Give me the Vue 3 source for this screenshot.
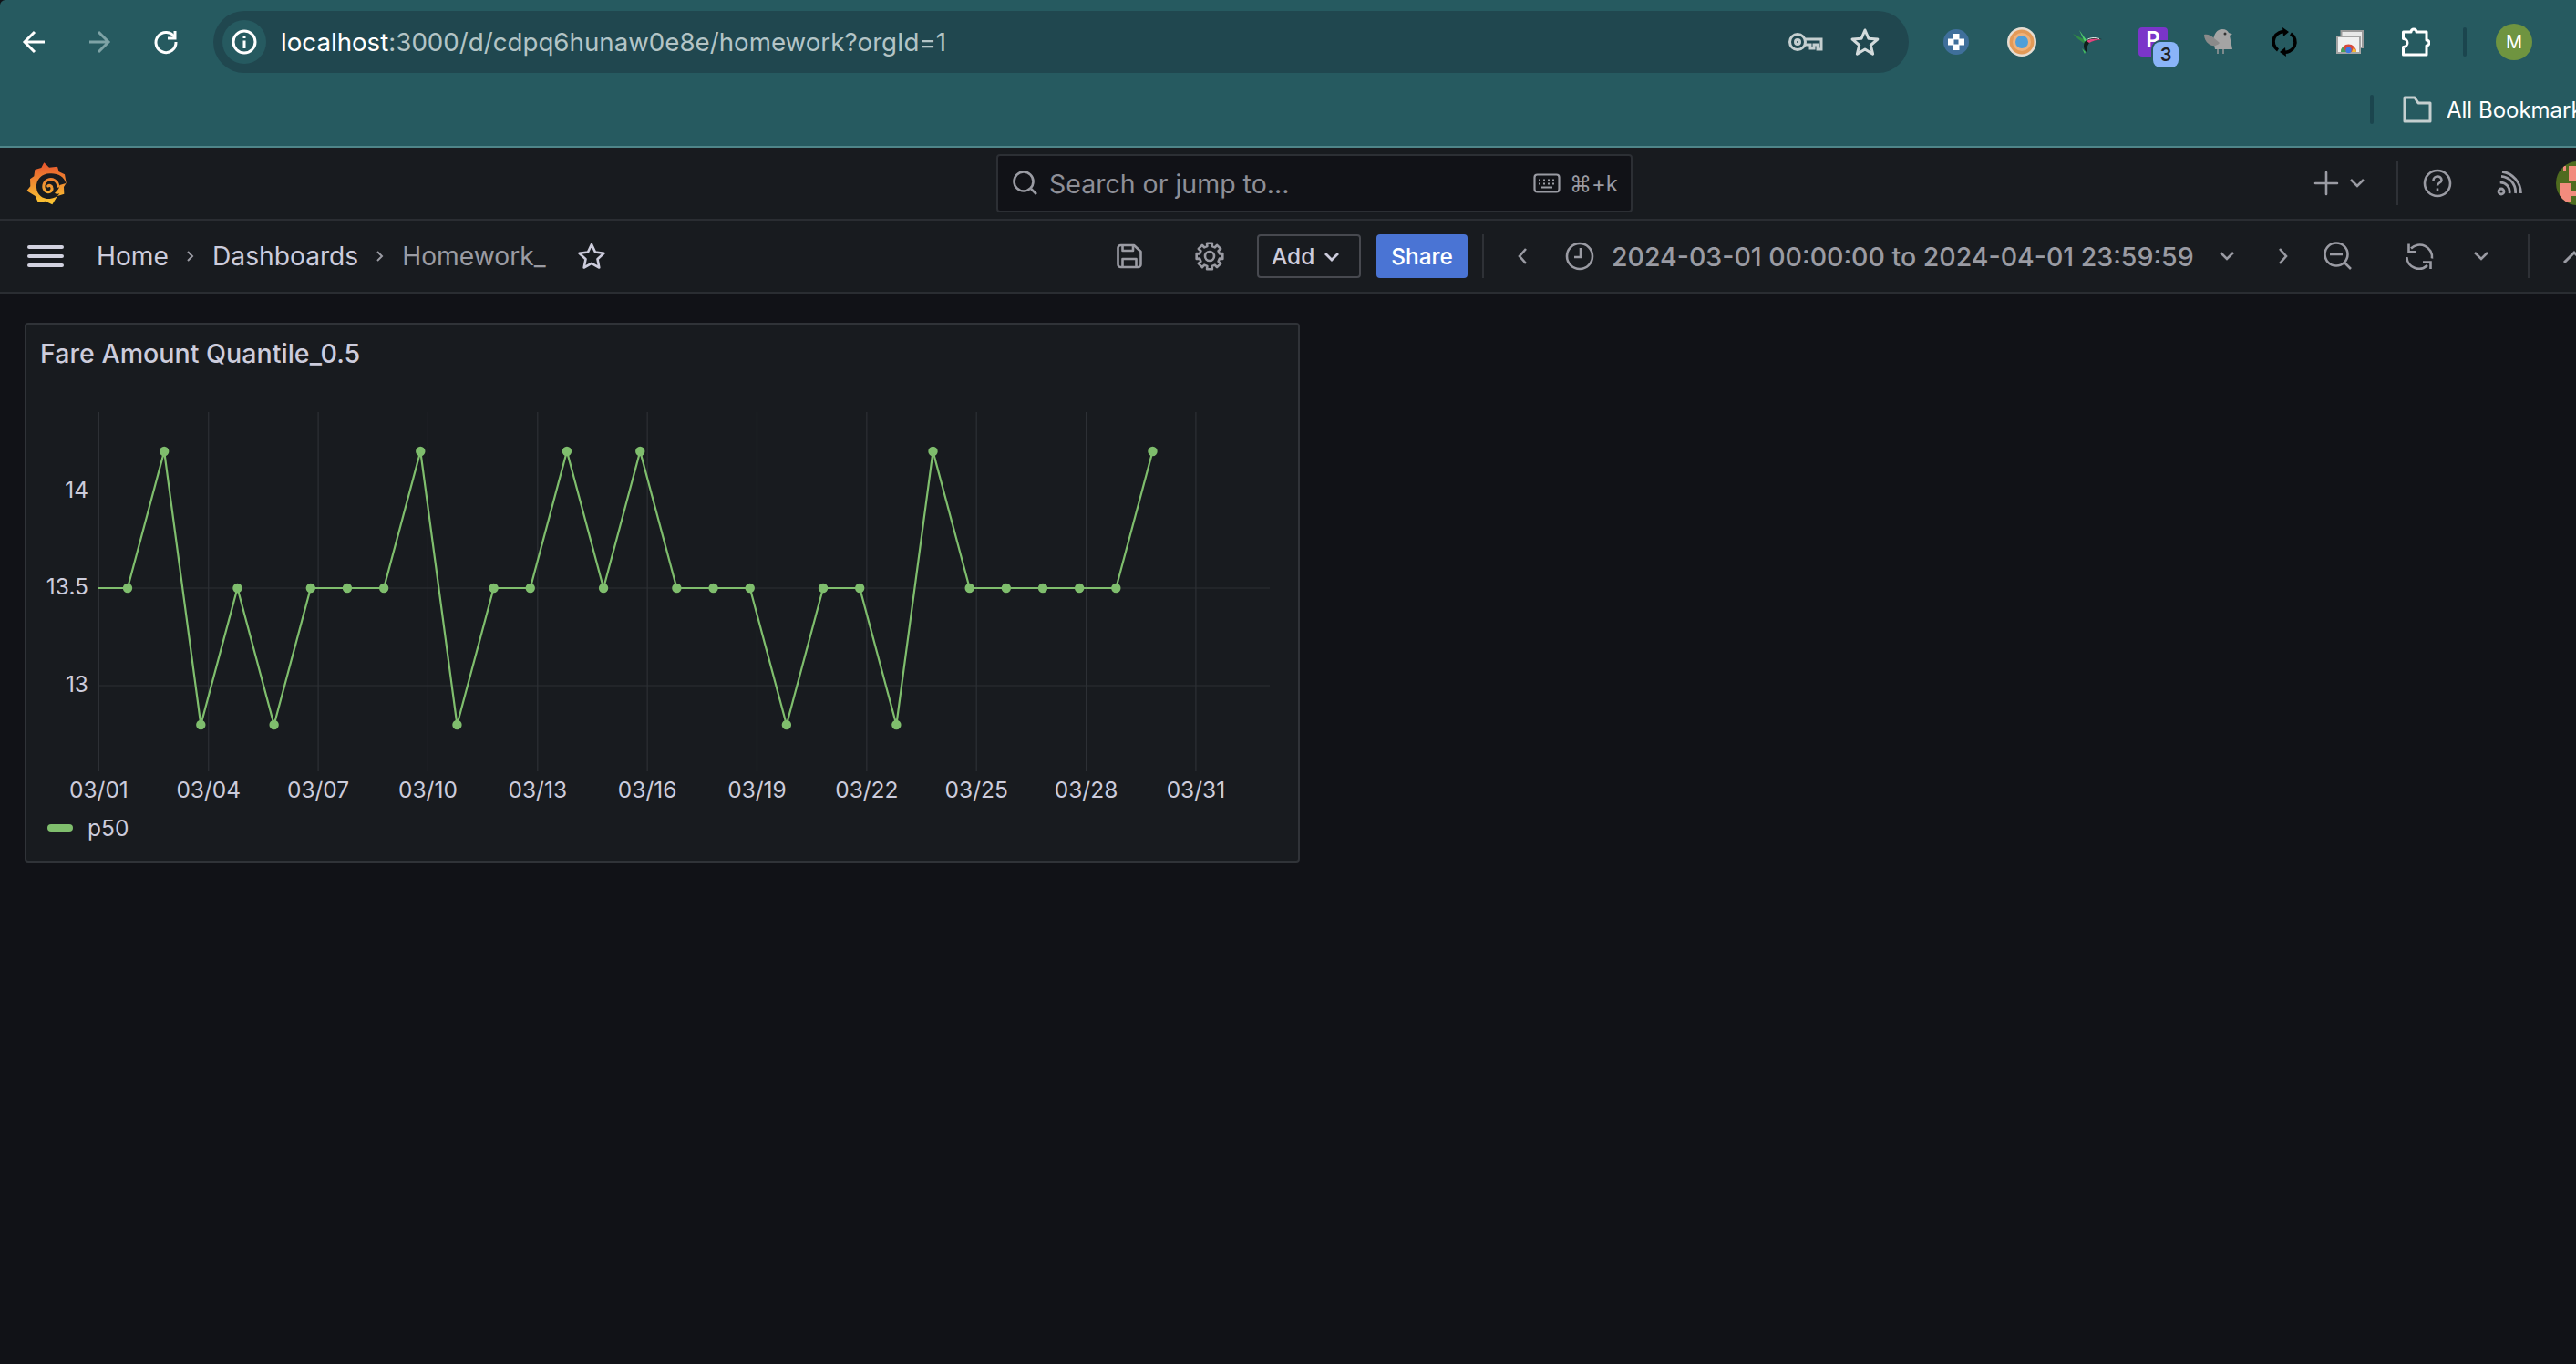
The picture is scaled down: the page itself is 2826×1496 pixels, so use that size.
<script setup>
// Chart geometry, in panel-svg coordinates
const ox = 29
const oy = 420
const xLabels = ['03/01', '03/04', '03/07', '03/10', '03/13', '03/16', '03/19', '03/22', '03/25', '03/28', '03/31']
const vTicks = xLabels.map((label, i) => ({ label, x: 108.4 + 120.35 * i - ox }))

const yLabels = [
  { label: '14', y: 538.5 - oy },
  { label: '13.5', y: 645 - oy },
  { label: '13', y: 752 - oy }
]

const levels = { h: 495, m: 645, l: 795 }
const series = 'mhlmlmmmhlmmhmhmmmlmmlhmmmmmh'.split('')
const points = series.map((s, i) => ({
  x: 140 + 40.16 * i - ox,
  y: levels[s] - oy
}))
const linePoints = [`${108 - ox},${levels.m - oy}`, ...points.map(p => `${p.x},${p.y}`)].join(' ')

// Settings cog outline: 8 teeth round the centre of a 32 box
const gearPath = (() => {
  const pts = []
  for (let i = 0; i < 8; i++) {
    const a = (i * Math.PI) / 4 - Math.PI / 2
    const step = 0.2
    pts.push([a - 0.24, 11.2], [a - step, 14.6], [a + step, 14.6], [a + 0.24, 11.2])
  }
  return 'M' + pts.map(([a, r]) => `${(16 + r * Math.cos(a)).toFixed(2)} ${(16 + r * Math.sin(a)).toFixed(2)}`).join('L') + 'Z'
})()
</script>

<template>
  <div class="screen">
    <header class="chrome">
      <div class="chrome-top">
        <div class="nav-btn">
          <svg width="32" height="32" viewBox="0 0 32 32" fill="none" stroke="#fff" stroke-width="3"><path d="M27 16H6M16 5 5 16l11 11" /></svg>
        </div>
        <div class="nav-btn">
          <svg width="32" height="32" viewBox="0 0 32 32" fill="none" stroke="#7ea3a6" stroke-width="3"><path d="M4 16h21M14 5l11 11-11 11" /></svg>
        </div>
        <div class="nav-btn">
          <svg width="32" height="32" viewBox="0 0 32 32" fill="none" stroke="#fff" stroke-width="3"><path d="M25.500 11A11 11 0 1 0 27 16" /><path d="M26 4v8h-8" /></svg>
        </div>
        <div class="omnibox">
          <div class="site-info">
            <svg width="28" height="28" viewBox="0 0 28 28" fill="none" stroke="#fff" stroke-width="3"><circle cx="14" cy="14" r="12" /><path d="M14 12.500V21M14 7v3" /></svg>
          </div>
          <div class="url"><span class="url-host">localhost</span>:3000/d/cdpq6hunaw0e8e/homework?orgId=1</div>
          <svg class="omni-key" width="40" height="28" viewBox="0 0 40 28" fill="none" stroke="#c5cfd0" stroke-width="3"><circle cx="11" cy="14" r="8.500" /><circle cx="11" cy="14" r="2.500" /><path d="M19.500 11H37v11h-4v-5h-4v4h-4v-4h-5.500" /></svg>
          <svg class="omni-star" width="34" height="34" viewBox="0 0 34 34" fill="none" stroke="#d3dbdc" stroke-width="3" stroke-linejoin="round"><path d="m17 4 3.900 9.200 10 .8-7.600 6.500 2.300 9.700L17 25l-8.600 5.200 2.300-9.700L3.100 14l10-.8z" /></svg>
        </div>
        <div class="ext-row">
          <div class="ext">
            <svg width="28" height="28" viewBox="0 0 28 28"><circle cx="14" cy="14" r="14" fill="#3f6f9b" /><path d="M10.500 5h7v5.500H23v7h-5.500V23h-7v-5.500H5v-7h5.500z" fill="#fff" /><rect x="11.500" y="11.500" width="5" height="5" fill="#3f6f9b" /></svg>
          </div>
          <div class="ext">
            <svg width="32" height="32" viewBox="0 0 32 32"><circle cx="16" cy="16" r="16" fill="#e6ddd2" /><circle cx="16" cy="16" r="13.500" fill="#e39a57" /><circle cx="16" cy="16" r="10" fill="#eeb27c" /><circle cx="16" cy="16" r="7" fill="#4f9fd9" /></svg>
          </div>
          <div class="ext">
            <svg width="32" height="26" viewBox="0 0 32 26"><path d="M0 4l12 6 1 5-7-5z" fill="#2f8a45" /><path d="M7 0l8 11-2 2z" fill="#4fd06a" /><path d="M13 13c3-4 11-5 19-3-7 1-12 2-14 4-3 4-3 8-2 11-4-3-5-8-3-12z" fill="#0e1f1a" /><path d="M15 12c5-3 12-3 16-1.500-5 0-9 1.500-13 3.500z" fill="#e0447e" /><path d="M15 11c4-3 10-3 14-1.500" fill="none" stroke="#dfeee6" /><path d="M10 20l4 4-1 2z" fill="#46c45f" /></svg>
          </div>
          <div class="ext">
            <div class="purple-ext">
              <span class="purple-mark">P</span>
            </div>
            <span class="ext-badge">3</span>
          </div>
          <div class="ext">
            <svg width="32" height="28" viewBox="0 0 32 28"><path d="M10 12C11 5 14 0 20 0c4 0 6 2 7 4l4 1.500-3 1.500 3 15H12z" fill="#a4a4a4" /><path d="M0 6c4-1 8 1 11 4l6 5c-3 4-9 4-12 1C2 14 0 10 0 6z" fill="#8a8a8a" /><circle cx="23" cy="5" r="1.500" fill="#333" /><path d="M15 22v5M21 22v5" stroke="#999" stroke-width="1.500" /></svg>
          </div>
          <div class="ext">
            <svg width="30" height="34" viewBox="0 0 30 34" fill="none" stroke="#000" stroke-width="3.600"><path d="M8 26A11 11 0 0 1 17 6.200" /><path d="M22 8A11 11 0 0 1 13 27.800" /><path d="M13 1l7 5-6 5z" fill="#000" stroke="none" /><path d="M17 33l-7-5 6-5z" fill="#000" stroke="none" /></svg>
          </div>
          <div class="ext">
            <svg width="30" height="26" viewBox="0 0 30 26">
              <rect x="5.500" y="1" width="23.500" height="18" fill="#e8e8e8" stroke="#9a9a9a" stroke-width="2" />
              <rect x="1" y="7" width="25" height="18" fill="#f0f0f0" stroke="#a4a4a4" stroke-width="2" />
              <path d="M5 24a8.500 8.500 0 0 1 17 0z" fill="#d7483a" />
              <path d="M5 24a8.500 8.500 0 0 1 2-5.500l4 5.500z" fill="#3fa45b" />
              <path d="M17 24l2-5a8.500 8.500 0 0 1 3 5z" fill="#f2c230" />
              <circle cx="13.500" cy="22" r="3.200" fill="#3b78e7" />
            </svg>
          </div>
          <div class="ext">
            <svg width="32" height="32" viewBox="0 0 32 32" fill="none" stroke="#fff" stroke-width="3" stroke-linejoin="round"><path d="M2.500 5H11a3 3 0 0 1 6 0h11v9a3 3 0 0 1 0 6v10H2.500v-8.500a4.500 4.500 0 0 0 0-9z" /></svg>
          </div>
        </div>
        <div class="chrome-sep sep-top"></div>
        <div class="profile">M</div>
      </div>
      <div class="chrome-bookmarks">
        <div class="chrome-sep"></div>
        <svg class="folder" width="32" height="30" viewBox="0 0 32 30" fill="none" stroke="#c5cfd0" stroke-width="3" stroke-linejoin="round"><path d="M2 27V2h11l4 6h13v20H2z" /></svg>
        <span class="bookmarks-label">All Bookmarks</span>
      </div>
    </header>

    <div class="gf-top">
      <svg class="gf-logo" width="60" height="60" viewBox="0 0 180 180">
        <defs>
          <linearGradient id="gfGrad" gradientUnits="userSpaceOnUse" x1="90" y1="22" x2="90" y2="160">
            <stop offset="0" stop-color="#e6552e" />
            <stop offset="1" stop-color="#fbc933" />
          </linearGradient>
        </defs>
        <path d="M85 22l17 16 27-3 5 17 19 9 5 28-8 13 1 23-22 7-17 28-22-11-25 3-9-20-28-17 12-15-1-24 13-9 3-22 21-6z" fill="url(#gfGrad)" />
        <path d="M157 90C152 68 128 56 104 58 78 58 58 78 60 104 62 130 82 142 104 141 118 140 130 134 136 124 129 126 124 125 120 122 130 114 136 106 136 96" fill="#181b1f" />
        <path d="M131 100C131 82 112 72 97 79 82 86 79 106 90 116 100 124 113 116 111 105 110 98 103 95 98 99" fill="none" stroke="url(#gfGrad)" stroke-width="9" stroke-linecap="round" />
      </svg>
      <div class="search-box">
        <svg class="ic" width="32" height="32" viewBox="0 0 32 32" fill="none" stroke="#9a9ba3" stroke-width="2.600"><circle cx="15" cy="14" r="10.500" /><path d="m23 22 6 6" /></svg>
        <span class="search-text">Search or jump to...</span>
        <svg class="kbd-ic" width="30" height="22" viewBox="0 0 30 22" fill="none" stroke="#9a9ba3" stroke-width="2.200"><rect x="1.500" y="1.500" width="27" height="19" rx="3" /><path d="M6 7.500h2M11 7.500h2M16 7.500h2M21 7.500h2M6 11.500h2M11 11.500h2M16 11.500h2M21 11.500h2M9 15.500h12" /></svg>
        <span class="kbd-text">⌘+k</span>
      </div>
      <svg class="plus-ic" width="32" height="32" viewBox="0 0 32 32" fill="none" stroke="#9a9ba3" stroke-width="2.600" stroke-linecap="round"><path d="M16 4v24M4 16h24" /></svg>
      <svg class="caret caret-plus" width="20" height="20" viewBox="0 0 20 20" fill="none" stroke="#9a9ba3" stroke-width="2.600"><path d="m3 6 7 7 7-7" /></svg>
      <div class="divider div-top"></div>
      <svg class="help-ic" width="32" height="32" viewBox="0 0 32 32" fill="none" stroke="#9a9ba3" stroke-width="2.600"><circle cx="16" cy="16" r="14" /><path d="M11.500 13c0-6 9-6 9-.5 0 3-4.500 3-4.500 6M16 21.500v2.500" /></svg>
      <svg class="rss-ic" width="28" height="28" viewBox="0 0 28 28" fill="none" stroke="#9a9ba3" stroke-width="2.800"><circle cx="5" cy="23" r="3" /><path d="M3.700 13.100A10 10 0 0 1 14 25M5 6.300A17 17 0 0 1 20.500 25M6 1.300A24 24 0 0 1 26.500 25" /></svg>
      <div class="user-avatar">
        <span class="pix pix-a"></span>
        <span class="pix pix-b"></span>
        <span class="pix pix-c"></span>
        <span class="pix pix-d"></span>
      </div>
    </div>

    <div class="gf-nav">
      <div class="burger">
        <span></span><span></span><span></span>
      </div>
      <nav class="crumbs">
        <span>Home</span>
        <svg class="crumb-sep" width="16" height="20" viewBox="0 0 16 20" fill="none" stroke="#9a9ba3" stroke-width="2"><path d="m5 5 5 5-5 5" /></svg>
        <span>Dashboards</span>
        <svg class="crumb-sep" width="16" height="20" viewBox="0 0 16 20" fill="none" stroke="#9a9ba3" stroke-width="2"><path d="m5 5 5 5-5 5" /></svg>
        <span class="crumb-current">Homework_</span>
      </nav>
      <svg class="fav" width="32" height="32" viewBox="0 0 32 32" fill="none" stroke="#ccccdc" stroke-width="2.600" stroke-linejoin="round"><path d="m16 3 4 8.500 9.500 1.200-7 6.500 1.800 9.300L16 23.800 7.700 28.500l1.800-9.300-7-6.500 9.500-1.200z" /></svg>
      <div class="spacer"></div>
      <div class="tools">
        <svg width="28" height="28" viewBox="0 0 28 28" fill="none" stroke="#9a9ba3" stroke-width="2.600" stroke-linejoin="round"><path d="M1.500 5a3 3 0 0 1 3-3H19l7.500 7v14a3 3 0 0 1-3 3h-19a3 3 0 0 1-3-3z" /><path d="M6.500 2.500V8H18V3M6.500 26v-9h15v9" /></svg>
        <svg class="t-gear" width="32" height="32" viewBox="0 0 32 32" fill="none" stroke="#9a9ba3" stroke-width="2.600" stroke-linejoin="round"><circle cx="16" cy="16" r="5" /><path :d="gearPath" /></svg>
        <button class="btn-add">Add
          <svg width="18" height="18" viewBox="0 0 18 18" fill="none" stroke="#ccccdc" stroke-width="2.800"><path d="m2 6 7 7 7-7" /></svg>
        </button>
        <button class="btn-share">Share</button>
        <div class="divider t-div1"></div>
        <svg class="t-prev" width="20" height="28" viewBox="0 0 20 28" fill="none" stroke="#9a9ba3" stroke-width="2.600"><path d="M13 6 6 14l7 8" /></svg>
        <svg class="t-clock" width="32" height="32" viewBox="0 0 32 32" fill="none" stroke="#9a9ba3" stroke-width="2.600"><circle cx="16" cy="16" r="14" /><path d="M17 7v10h-7" /></svg>
        <span class="time-range">2024-03-01 00:00:00 to 2024-04-01 23:59:59</span>
        <svg class="t-caret1" width="20" height="20" viewBox="0 0 20 20" fill="none" stroke="#9a9ba3" stroke-width="2.600"><path d="m3 6 7 7 7-7" /></svg>
        <svg class="t-next" width="20" height="28" viewBox="0 0 20 28" fill="none" stroke="#9a9ba3" stroke-width="2.600"><path d="m7 6 7 8-7 8" /></svg>
        <svg class="t-zoom" width="32" height="32" viewBox="0 0 32 32" fill="none" stroke="#9a9ba3" stroke-width="2.600"><circle cx="14" cy="14" r="12.500" /><path d="M7 14h14M23 23l7 7" /></svg>
        <svg class="t-sync" width="32" height="36" viewBox="0 0 32 36" fill="none" stroke="#9a9ba3" stroke-width="2.600"><path d="M7 9.500A13.500 13.500 0 0 1 30 20.500" /><path d="M4.500 4.500v8.800H12" /><path d="M25 28A13.500 13.500 0 0 1 2.300 19" /><path d="M28.500 32v-7.500H20" /></svg>
        <svg class="t-caret2" width="20" height="20" viewBox="0 0 20 20" fill="none" stroke="#9a9ba3" stroke-width="2.600"><path d="m3 6 7 7 7-7" /></svg>
        <div class="divider t-div2"></div>
        <svg class="t-collapse" width="24" height="20" viewBox="0 0 24 20" fill="none" stroke="#9a9ba3" stroke-width="3"><path d="m2 17 11-11 11 11" /></svg>
      </div>
    </div>

    <main class="dash">
      <section class="panel">
        <h2 class="panel-title">Fare Amount Quantile_0.5</h2>
        <svg class="chart" width="1395" height="470" viewBox="0 0 1395 470">
          <line
            v-for="t in vTicks"
            :key="t.label"
            :x1="t.x"
            :x2="t.x"
            y1="32"
            y2="426"
            class="grid"
          />
          <line
            v-for="t in yLabels"
            :key="t.label"
            x1="79"
            x2="1364"
            :y1="t.y"
            :y2="t.y"
            class="grid"
          />
          <polyline :points="linePoints" class="series" />
          <circle v-for="(p, i) in points" :key="i" :cx="p.x" :cy="p.y" r="5.200" class="dot" />
          <text v-for="t in yLabels" :key="t.label" x="68" :y="t.y + 7" text-anchor="end" class="tick">{{ t.label }}</text>
          <text v-for="t in vTicks" :key="t.label" :x="t.x" y="455" text-anchor="middle" class="tick">{{ t.label }}</text>
        </svg>
        <div class="legend">
          <span class="swatch"></span>
          <span class="legend-name">p50</span>
        </div>
      </section>
    </main>
  </div>
</template>

<style>
html, body {
  margin: 0;
  background: #111217;
}
</style>

<style scoped>
.screen {
  width: 2826px;
  height: 1496px;
  overflow: hidden;
  background: #111217;
  font-family: Inter, "Liberation Sans", sans-serif;
  color: #ccccdc;
}

/* browser chrome */
.chrome {
  background: #265a60;
  border-bottom: 2px solid #4f8589;
  border-top-left-radius: 6px;
}

.chrome-top {
  display: flex;
  align-items: center;
  height: 92px;
  padding-left: 2px;
}

.nav-btn {
  display: flex;
  align-items: center;
  justify-content: center;
  width: 72px;
  flex-shrink: 0;
}

.omnibox {
  display: flex;
  align-items: center;
  flex-shrink: 0;
  box-sizing: border-box;
  width: 1860px;
  height: 68px;
  margin-left: 16px;
  padding: 0 31px 0 10px;
  border-radius: 34px;
  background: #20474f;
}

.site-info {
  display: flex;
  align-items: center;
  justify-content: center;
  width: 48px;
  height: 48px;
  border-radius: 50%;
  background: #265a60;
}

.url {
  margin-left: 16px;
  font-size: 27.7px;
  color: #b3c4c6;
  white-space: nowrap;
}

.url-host {
  color: #fff;
}

.omni-key {
  margin-left: auto;
}

.omni-star {
  margin-left: 28px;
}

.ext-row {
  display: flex;
  margin-left: 16px;
}

.ext {
  display: flex;
  align-items: center;
  justify-content: center;
  width: 72px;
  height: 40px;
  position: relative;
}

.purple-ext {
  display: flex;
  justify-content: center;
  width: 32px;
  height: 32px;
  border-radius: 4px;
  background: #7b35c9;
}

.purple-mark {
  font-size: 24px;
  line-height: 28px;
  font-weight: 600;
  color: #fff;
}

.ext-badge {
  position: absolute;
  left: 36px;
  top: 20px;
  width: 28px;
  height: 28px;
  border-radius: 8px;
  background: #8ab4f8;
  box-shadow: 0 0 0 2px #265a60;
  color: #202124;
  font-size: 20px;
  font-weight: 600;
  line-height: 28px;
  text-align: center;
}

.chrome-sep {
  width: 4px;
  height: 32px;
  border-radius: 2px;
  background: #1b454e;
  flex-shrink: 0;
}

.sep-top {
  margin-left: 16px;
}

.profile {
  flex-shrink: 0;
  width: 40px;
  height: 40px;
  margin-left: 32px;
  border-radius: 50%;
  background: #6f9440;
  color: #fff;
  font-size: 20px;
  line-height: 40px;
  text-align: center;
}

.chrome-bookmarks {
  display: flex;
  align-items: center;
  height: 56px;
  padding: 0 0 12px 2600px;
}

.folder {
  flex-shrink: 0;
  margin-left: 32px;
}

.bookmarks-label {
  margin-left: 16px;
  color: #fff;
  font-size: 24px;
  white-space: nowrap;
}

/* grafana top bar */
.gf-top,
.gf-nav {
  display: flex;
  align-items: center;
  height: 78px;
  background: #181b1f;
  border-bottom: 2px solid #2a2d32;
}

.gf-logo {
  flex-shrink: 0;
  margin-left: 20px;
}

.search-box {
  display: flex;
  align-items: center;
  flex-shrink: 0;
  box-sizing: border-box;
  width: 698px;
  height: 64px;
  margin-left: 1013px;
  padding: 0 14px 0 13px;
  border: 2px solid #2c2f34;
  border-radius: 4px;
  background: #111217;
}

.search-text {
  margin-left: 11px;
  color: #8e8f97;
  font-size: 28.5px;
}

.kbd-ic {
  margin-left: auto;
}

.kbd-text {
  margin-left: 10px;
  color: #9a9ba3;
  font-size: 24px;
}

.plus-ic {
  flex-shrink: 0;
  margin-left: 745px;
}

.caret-plus {
  flex-shrink: 0;
  margin-left: 8px;
}

.divider {
  flex-shrink: 0;
  width: 2px;
  height: 48px;
  background: #2e3136;
}

.div-top {
  margin-left: 33px;
}

.help-ic {
  flex-shrink: 0;
  margin-left: 27px;
}

.rss-ic {
  flex-shrink: 0;
  margin-left: 49px;
}

.user-avatar {
  position: relative;
  flex-shrink: 0;
  width: 48px;
  height: 48px;
  margin-left: 37px;
  overflow: hidden;
  border-radius: 50%;
  background: #4f6b1f;
}

.pix {
  position: absolute;
  background: #f28b7d;
}

.pix-a {
  left: 4px;
  top: 24px;
  width: 12px;
  height: 20px;
}

.pix-b {
  left: 16px;
  top: 33px;
  width: 6px;
  height: 5px;
}

.pix-c {
  left: 14px;
  top: 5px;
  width: 8px;
  height: 17px;
}

.pix-d {
  left: 8px;
  top: 5px;
  width: 3px;
  height: 5px;
}

/* dashboard toolbar */
.burger {
  display: flex;
  flex-direction: column;
  flex-shrink: 0;
  gap: 6px;
  width: 40px;
  margin-left: 30px;
}

.burger span {
  height: 4px;
  border-radius: 2px;
  background: #d2d2e0;
}

.crumbs {
  display: flex;
  align-items: center;
  flex-shrink: 0;
  margin-left: 36px;
  font-size: 28.2px;
}

.crumb-sep {
  margin: 0 16px;
}

.crumb-current {
  color: #9a9ba3;
}

.fav {
  flex-shrink: 0;
  margin-left: 34px;
}

.spacer {
  flex: 1;
}

.tools {
  display: flex;
  align-items: center;
  flex-shrink: 0;
  width: 1601px;
  overflow: hidden;
}

.tools svg {
  flex-shrink: 0;
}

.t-gear {
  margin-left: 58px;
}

.btn-add {
  display: flex;
  align-items: center;
  gap: 10px;
  box-sizing: border-box;
  flex-shrink: 0;
  width: 114px;
  height: 48px;
  margin-left: 36px;
  padding: 0 0 0 14px;
  border: 2px solid #47494f;
  border-radius: 4px;
  background: transparent;
  color: #ccccdc;
  font: 500 24.4px Inter, sans-serif;
}

.btn-share {
  flex-shrink: 0;
  width: 100px;
  height: 48px;
  margin-left: 17px;
  padding: 0;
  border: 0;
  border-radius: 4px;
  background: #4a74d4;
  color: #fff;
  font: 500 24.4px Inter, sans-serif;
}

.t-div1 {
  margin-left: 16px;
}

.t-prev {
  margin-left: 33px;
}

.t-clock {
  margin-left: 36px;
}

.time-range {
  flex-shrink: 0;
  width: 640px;
  margin-left: 19px;
  color: #9a9ba3;
  font-size: 28.5px;
  font-weight: 500;
  white-space: nowrap;
}

.t-caret1 {
  margin-left: 25px;
}

.t-next {
  margin-left: 41px;
}

.t-zoom {
  margin-left: 35px;
}

.t-sync {
  margin-left: 57px;
}

.t-caret2 {
  margin-left: 42px;
}

.t-div2 {
  margin-left: 41px;
}

.t-collapse {
  margin-left: 36px;
}

/* dashboard body */
.dash {
  padding: 32px 0 0 27px;
}

.panel {
  box-sizing: border-box;
  width: 1399px;
  height: 592px;
  border: 2px solid #303338;
  border-radius: 4px;
  background: #181b1f;
}

.panel-title {
  margin: 0;
  padding-left: 15px;
  color: #ccccdc;
  font-size: 28.6px;
  font-weight: 500;
  line-height: 64px;
}

.chart {
  display: block;
}

.grid {
  stroke: #2d3035;
  stroke-width: 1.2;
}

.series {
  fill: none;
  stroke: #7fbe6d;
  stroke-width: 2.2;
  stroke-linejoin: round;
}

.dot {
  fill: #7fbe6d;
}

.tick {
  fill: #ccccdc;
  font-size: 24.5px;
}

.legend {
  display: flex;
  align-items: center;
  height: 36px;
  padding-left: 23px;
}

.swatch {
  width: 28px;
  height: 8px;
  border-radius: 4px;
  background: #7fbe6d;
}

.legend-name {
  margin-left: 16px;
  color: #ccccdc;
  font-size: 24.5px;
}
</style>
